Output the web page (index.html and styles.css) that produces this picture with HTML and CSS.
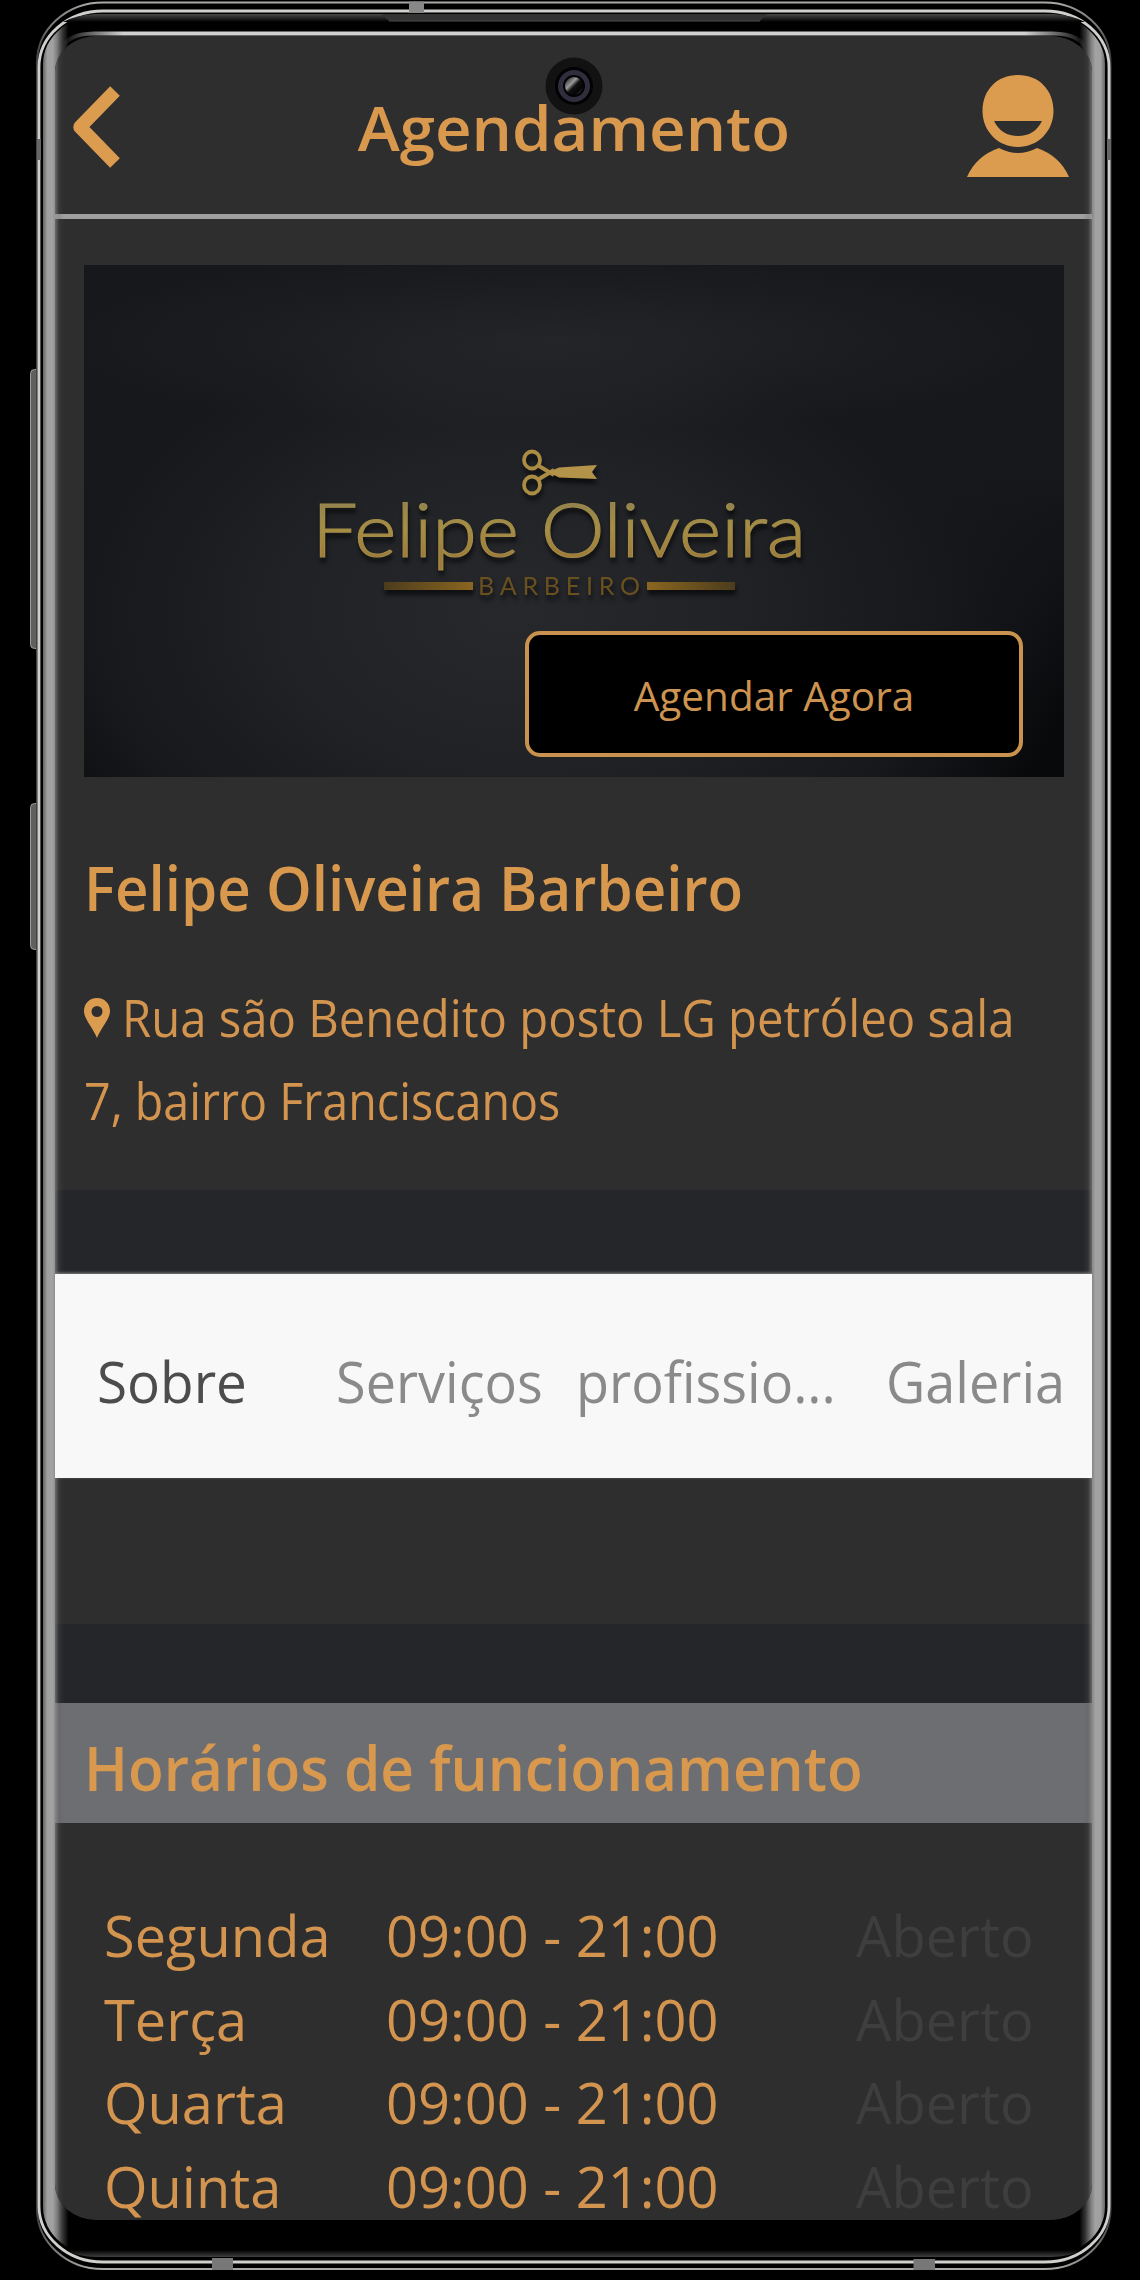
FILE: index.html
```
<!DOCTYPE html>
<html lang="pt-BR">
<head>
<meta charset="utf-8">
<title>Agendamento</title>
<link rel="stylesheet" href="styles.css">
</head>
<body>
<div class="device">
  <svg class="frame" viewBox="0 0 1140 2280" aria-hidden="true">
    <defs>
      <linearGradient id="rail"><stop offset="0" stop-color="#666"/><stop offset=".004" stop-color="#a0a0a0"/><stop offset=".009" stop-color="#a2a2a2"/><stop offset=".013" stop-color="#808080"/><stop offset=".018" stop-color="#3a3a3a"/><stop offset=".024" stop-color="#000"/><stop offset=".976" stop-color="#000"/><stop offset=".982" stop-color="#3a3a3a"/><stop offset=".987" stop-color="#808080"/><stop offset=".991" stop-color="#a2a2a2"/><stop offset=".996" stop-color="#a0a0a0"/><stop offset="1" stop-color="#666"/></linearGradient>
      <linearGradient id="outer"><stop offset="0" stop-color="#444"/><stop offset=".012" stop-color="#777"/><stop offset=".05" stop-color="#a8a8a4"/><stop offset=".95" stop-color="#a8a8a4"/><stop offset=".988" stop-color="#777"/><stop offset="1" stop-color="#444"/></linearGradient>
      <linearGradient id="lipTop" x2="0" y2="1"><stop offset="0" stop-color="#484848"/><stop offset="1" stop-color="#000"/></linearGradient>
      <linearGradient id="lipBottom" x2="0" y2="1"><stop offset="0" stop-color="#000"/><stop offset="1" stop-color="#404040"/></linearGradient>
      <linearGradient id="edge"><stop offset="0" stop-color="#ddd" stop-opacity="0"/><stop offset=".06" stop-color="#d0d0d0"/><stop offset=".94" stop-color="#d0d0d0"/><stop offset="1" stop-color="#ddd" stop-opacity="0"/></linearGradient>
      <linearGradient id="metal" x2="0" y2="1"><stop offset="0" stop-color="#888"/><stop offset=".4" stop-color="#bbb"/><stop offset="1" stop-color="#777"/></linearGradient>
    </defs>
    <rect x="30.500" y="369.500" width="12" height="279" rx="4" fill="#606060" stroke="#9a9a9a"/>
    <rect x="30.500" y="803.500" width="12" height="146" rx="4" fill="#606060" stroke="#9a9a9a"/>
    <rect x="37" y="2.500" width="1073.500" height="2266.500" rx="66" ry="60" fill="#000" stroke="url(#outer)" stroke-width="2"/>
    <rect x="39" y="11" width="1070" height="2251" rx="64" ry="56" fill="#000" stroke="#cfcfcc" stroke-width="2.800"/>
    <rect x="43" y="14" width="1062" height="2243" rx="60" ry="50" fill="url(#rail)"/>
    <path d="M95 14H1053Q1072 15 1085 22H63Q76 15 95 14Z" fill="url(#lipTop)"/>
    <path d="M381 14H767L760 21H389Z" fill="#333"/><path d="M389 21H760" stroke="#484848"/>
    <path d="M66 2250H1082Q1070 2257 1050 2257H96Q78 2257 66 2250Z" fill="url(#lipBottom)"/>
    <path d="M62 50Q66 34 94 33.500H1053Q1081 34 1086 50" fill="none" stroke="url(#edge)" stroke-width="4"/>
    <path d="M409 1.500H424V13H409ZM212 2258H233V2270H212ZM913.500 2259H935V2270H913.500Z" fill="url(#metal)"/>
    <path d="M37 139H41V160H37ZM1107 139H1111V160H1107Z" fill="#666"/>
  </svg>

  <main class="screen">
    <header class="topbar">
      <svg class="back" viewBox="0 0 52 86"><path d="M45 7 10 43 45 79" fill="none" stroke="#dc9c50" stroke-width="13.500" stroke-linejoin="round"/></svg>
      <h1 class="title">Agendamento</h1>
      <svg class="profile" viewBox="0 0 104 103"><path fill="#dc9c50" fill-rule="evenodd" d="M52 0C73 0 87.500 15 87.500 36S71 72 52 72 16.500 57 16.500 36 31 0 52 0ZM28 46C33 56 41 61 52 61S71 56 76 46Z"/><path fill="#dc9c50" d="M33 73Q52 83 71 73Q94 81 103 102H1Q10 81 33 73Z"/></svg>
    </header>

    <section class="intro">
      <div class="banner">
        <svg class="logo" viewBox="0 0 500 190">
          <defs>
            <linearGradient id="gold" x2="0" y2="1"><stop offset=".2" stop-color="#8d8154"/><stop offset=".5" stop-color="#a88f42"/><stop offset=".8" stop-color="#a07a38"/></linearGradient>
            <linearGradient id="barL"><stop offset="0" stop-color="#4c3c1c"/><stop offset="1" stop-color="#8a6620"/></linearGradient>
            <linearGradient id="barR"><stop offset="0" stop-color="#8a6620"/><stop offset="1" stop-color="#4c3c1c"/></linearGradient>
          </defs>
          <g fill="none" stroke="#aa8d42" stroke-width="3.800">
            <ellipse cx="219" cy="16" rx="8" ry="8.500"/><ellipse cx="219" cy="41" rx="8" ry="8.500"/>
            <path d="M226 22 241 31M226 35 241 26"/>
          </g>
          <path d="M235 28 246 23.500 284 21 279 28 284 35 246 33.500Z" fill="#b3924a"/>
          <text class="logo-name" x="-1" y="113" textLength="494" lengthAdjust="spacingAndGlyphs" fill="url(#gold)">Felipe Oliveira</text>
          <rect x="71" y="138" width="89" height="8" fill="url(#barL)"/>
          <text class="logo-role" x="165" y="151" textLength="162">BARBEIRO</text>
          <rect x="334" y="138" width="88" height="8" fill="url(#barR)"/>
        </svg>
        <button class="book">Agendar Agora</button>
      </div>
      <h2 class="name">Felipe Oliveira Barbeiro</h2>
      <address class="address"><svg class="pin" viewBox="0 0 26 40"><path fill="#dc9c50" fill-rule="evenodd" d="M13 0C21 0 26 6 26 13 26 21 18 28 13 40 8 28 0 21 0 13 0 6 5 0 13 0ZM13 8A5.500 5.500 0 1 0 13 19 5.500 5.500 0 1 0 13 8Z"/></svg><span class="street">Rua são Benedito posto LG petróleo sala</span><br><span class="district">7, bairro Franciscanos</span></address>
    </section>

    <nav class="tabs">
      <a class="tab tab-active">Sobre</a>
      <a class="tab">Serviços</a>
      <a class="tab">profissio...</a>
      <a class="tab">Galeria</a>
    </nav>
    <section class="about"></section>

    <h2 class="hours-title"><span>Horários de funcionamento</span></h2>
    <section class="hours">
      <div class="row"><span>Segunda</span><span>09:00 - 21:00</span><span class="status">Aberto</span></div>
      <div class="row"><span>Terça</span><span>09:00 - 21:00</span><span class="status">Aberto</span></div>
      <div class="row"><span>Quarta</span><span>09:00 - 21:00</span><span class="status">Aberto</span></div>
      <div class="row"><span>Quinta</span><span>09:00 - 21:00</span><span class="status">Aberto</span></div>
    </section>
  </main>

  <svg class="camera" viewBox="0 0 58 58" aria-hidden="true">
    <defs><linearGradient id="lens" x1="0" y1="0" x2="1" y2="1"><stop offset=".1" stop-color="#333"/><stop offset=".36" stop-color="#999"/><stop offset=".52" stop-color="#111"/><stop offset=".75" stop-color="#050505"/><stop offset="1" stop-color="#555"/></linearGradient></defs>
    <circle cx="29" cy="29" r="28.500" fill="#121213"/><circle cx="29" cy="29" r="19" fill="#020204"/>
    <circle cx="29" cy="29" r="13.500" fill="none" stroke="#302e3d" stroke-width="5"/><circle cx="29" cy="29" r="9" fill="url(#lens)"/>
  </svg>
</div>
</body>
</html>
```
FILE: styles.css
```
* { box-sizing: border-box; }
body { margin: 0; background: #000; font-family: "Open Sans", "Noto Sans", sans-serif; color: #d2944e; }
h1, h2 { margin: 0; font-weight: 650; font-size: 62px; line-height: 80px; color: #d8994f; white-space: nowrap; }

.device { position: relative; width: 1140px; height: 2280px; padding: 36px 48px 0 55px; overflow: hidden; }
.frame { position: absolute; inset: 0; width: 1140px; height: 2280px; }
.camera { position: absolute; left: 545px; top: 57px; width: 58px; height: 58px; }

.screen { position: relative; width: 1037px; height: 2184px; overflow: hidden; border-radius: 42px / 36px; background: #25262a; }
.screen::after {
  content: ""; position: absolute; inset: 0; pointer-events: none;
  background:
    linear-gradient(90deg, rgba(150,150,150,.6), rgba(90,90,90,.22) 4px, transparent 9px),
    linear-gradient(270deg, rgba(150,150,150,.6), rgba(90,90,90,.22) 4px, transparent 9px);
}

.topbar { display: flex; justify-content: space-between; height: 183px; padding: 39px 22px 0 15px; border-bottom: 5px solid #a0a0a0; background: #2e2e2e; }
.back { width: 52px; height: 86px; margin: 9px 60px 0 0; }
.title { margin-top: 12px; transform: scaleX(1.025); }
.profile { width: 104px; height: 103px; }

.intro { height: 971px; padding: 45.5px 28px 0 29px; background: #2e2e2e; }
.banner {
  display: flex; flex-direction: column; height: 512px; padding: 179px 41px 0 229px;
  background:
    radial-gradient(ellipse 50% 18% at 48% 15%, rgba(48,49,53,.5), transparent),
    radial-gradient(ellipse 58% 75% at 44% 68%, #27282c 0%, #222327 35%, #17181b 75%, transparent 100%),
    linear-gradient(#17181b, #17181c 40%, #08090b 85%);
}
.logo { width: 500px; height: 190px; margin-bottom: -3px; overflow: visible; filter: drop-shadow(1px 5px 2px rgba(0,0,0,.6)); }
.logo-name { font: 300 75px Lato, sans-serif; stroke: #a08a48; stroke-width: 1.2px; }
.logo-role { font: 400 25px Lato, sans-serif; fill: #69501f; }
.book { align-self: flex-end; width: 498px; height: 126px; flex: none; padding: 4px 0 0; border: 4px solid #c9934f; border-radius: 15px; background: #000; color: #cd9350; font: 450 40.5px/50px "Open Sans", sans-serif; }
.name { margin: 70px 0 0 0; transform: scaleX(.939); transform-origin: left; }
.address { margin-top: 49px; font-style: normal; font-size: 51px; line-height: 83.5px; white-space: nowrap; }
.pin { width: 26px; height: 40px; margin-right: 12px; vertical-align: -1px; }
.street, .district { display: inline-block; transform: scaleX(.927); transform-origin: left; }
.district { transform: scaleX(.914); }

.tabs { position: relative; z-index: 1; display: grid; grid-template-columns: 239px 240px 310px auto; height: 204px; margin-top: 84px; padding: 5px 0 0 42px; background: #f8f8f8; box-shadow: 0 -1px 3px #888; }
.tab { color: #8a8a8a; font-size: 56px; line-height: 204px; white-space: nowrap; transform: scaleX(.965); transform-origin: left; }
.tab-active { color: #4c4c4c; transform: scaleX(.98); }
.about { height: 146px; background: #2e2e2e; }

.hours-title { height: 120px; margin-top: 79px; padding: 24px 0 0 29px; background: #6d6e71; }
.hours-title span { display: inline-block; transform: scaleX(.944); transform-origin: left; }
.hours { height: 397px; padding: 71px 0 0 49px; background: #2e2e2e; }
.row { display: grid; grid-template-columns: 282px 470px auto; height: 83.5px; font-size: 57px; line-height: 83.5px; }
.row span { transform: scaleX(.982); transform-origin: left; white-space: nowrap; }
.row .status { color: #3e3e3e; }
```
